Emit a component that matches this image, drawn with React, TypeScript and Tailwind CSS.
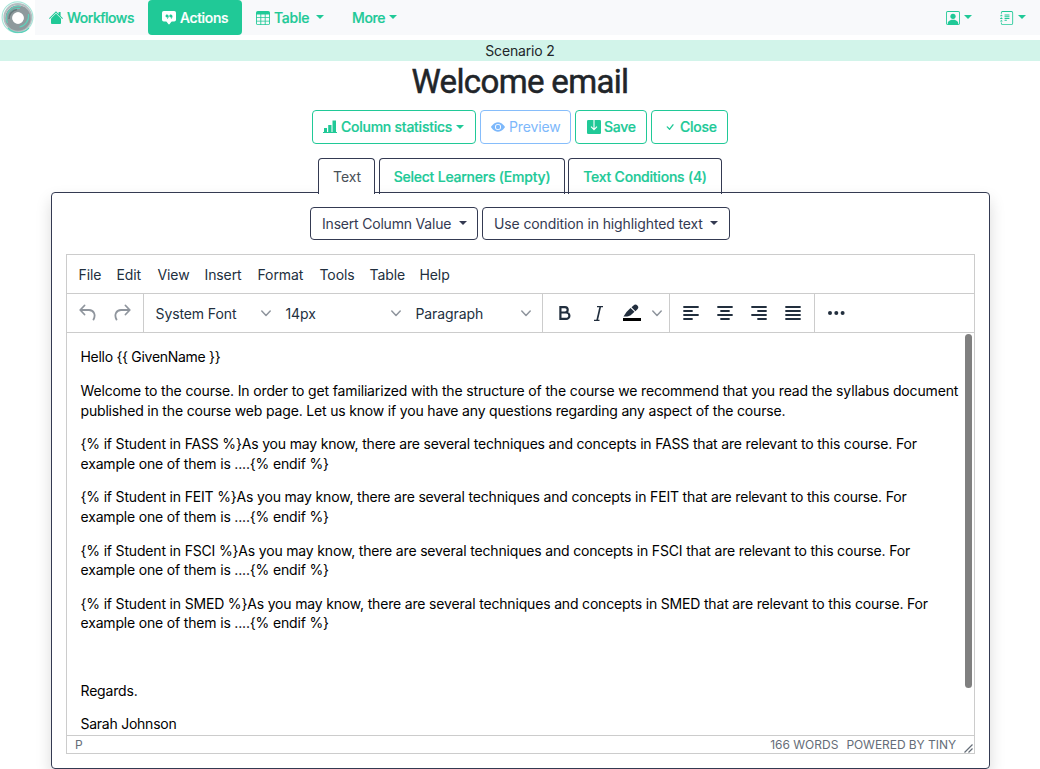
import type { ReactNode } from "react";
import { BsChatSquareQuoteFill, BsTable, BsPersonSquare, BsJournalText, BsEyeFill, BsCheck } from "react-icons/bs";

function Caret({ className = "" }: { className?: string }) {
  return (
    <svg width="8" height="4" viewBox="0 0 8 4" className={"inline-block shrink-0 " + className} fill="currentColor">
      <path d="M0 0h8L4 4z" />
    </svg>
  );
}

function Chevron() {
  return (
    <svg width="10" height="7" viewBox="0 0 10 7" fill="none" stroke="#8f959d" strokeWidth="1.5" strokeLinecap="round" strokeLinejoin="round">
      <path d="M.8 1 5 5.4 9.2 1" />
    </svg>
  );
}

function Logo() {
  return (
    <svg width="35" height="35" viewBox="0 0 35 35" className="shrink-0 bg-white" fill="none">
      <circle cx="17.5" cy="17.3" r="15.4" stroke="#a8e6d9" strokeWidth="1.2" />
      <circle cx="17.8" cy="17.5" r="13.4" stroke="#b4bdc0" strokeWidth="2" />
      <circle cx="18" cy="18" r="9.2" stroke="#8e9a9d" strokeWidth="7" />
      <path d="M7.500 23A12 12 0 0 1 21 6.500M11 12.500a9.500 9.500 0 0 1 9-4" stroke="#63cdb9" strokeWidth="1.200" />
      <path d="M28.500 14a11.500 11.500 0 0 1-9 13M8 28a14.500 14.500 0 0 0 21 0" stroke="#5fd0bb" strokeWidth="1.200" />
      <path d="M9 19a9 9 0 0 1 8-9.500" stroke="#69787c" strokeWidth="1.500" />
      <circle cx="18" cy="18" r="5.7" fill="#fff" />
    </svg>
  );
}

function HouseIcon() {
  return (
    <svg width="14" height="13" viewBox="0 0 14 13" fill="currentColor">
      <path d="M7 .3 9.600 2.900V1h2v3.900L14 7.300l-.7.6L7 1.800.7 7.900 0 7.300z" />
      <path d="M7 2.600 12 7.500v4.200c0 .7-.5 1.300-1.200 1.300H3.200C2.500 13 2 12.400 2 11.700V7.500z" />
    </svg>
  );
}

function StatsIcon() {
  return (
    <svg width="14" height="13" viewBox="0 0 14 13" fill="currentColor">
      <path d="M1 8h3v4H1zM5.200 5h3.300v7H5.200zM9.500.5h3.500V12H9.500zM0 12h14v1H0z" />
    </svg>
  );
}

function SaveIcon() {
  return (
    <svg width="14" height="14" viewBox="0 0 14 14" fill="none">
      <rect width="14" height="14" rx="1.300" fill="currentColor" />
      <path d="M7 0v9.200M4 6.600l3 3 3-3" stroke="#fff" strokeWidth="1.100" />
    </svg>
  );
}

const alignments: [number, number][][] = [
  [[1, 15], [1, 9], [1, 15], [1, 9]],
  [[1, 15], [4, 12], [1, 15], [4, 12]],
  [[1, 15], [7, 15], [1, 15], [7, 15]],
  [[1, 15], [1, 15], [1, 15], [1, 15]],
];

function Align({ rows }: { rows: [number, number][] }) {
  return (
    <svg width="16" height="14" viewBox="0 0 16 14" stroke="#222f3e" strokeWidth="1.8" strokeLinecap="round">
      {rows.map(([a, b], i) => (
        <path key={i} d={`M${a} ${1 + i * 4}H${b}`} />
      ))}
    </svg>
  );
}

function Outline({ className, children }: { className: string; children: ReactNode }) {
  return <button className={"flex shrink-0 items-center rounded-[4px] border pb-px whitespace-nowrap " + className}>{children}</button>;
}

const menus = [
  { name: "File", cls: "w-[38px]" },
  { name: "Edit", cls: "w-[41px]" },
  { name: "View", cls: "w-[47px]" },
  { name: "Insert", cls: "w-[53px]" },
  { name: "Format", cls: "w-[62px]" },
  { name: "Tools", cls: "w-[50px]" },
  { name: "Table", cls: "w-[50px]" },
  { name: "Help", cls: "w-[40px]" },
];

const conditions = ["FASS", "FEIT", "FSCI", "SMED"];

export default function App() {
  return (
    <div className="h-[769px] w-[1040px] overflow-hidden bg-white font-['Inter',sans-serif] text-[14px] text-[#212529]">
      <nav className="flex h-[35px] items-center bg-[#f8f9fb] font-medium tracking-[-0.25px] text-[#20c997] [-webkit-text-stroke:0.2px]">
        <Logo />
        <a className="ml-[14px] flex w-[99px] items-center gap-[4px] tracking-[-0.5px]"><HouseIcon />Workflows</a>
        <a className="flex h-[35px] w-[94px] items-center gap-[4px] rounded-[4px] bg-[#20c997] pl-[14px] tracking-[-0.35px] text-white"><BsChatSquareQuoteFill size={14} />Actions</a>
        <a className="ml-[14px] flex w-[96px] items-center gap-[4px]"><BsTable size={14} />Table<Caret className="mb-[2px] ml-[3px]" /></a>
        <a className="flex items-center gap-[4px] tracking-[-0.4px]">More<Caret className="mb-[2px]" /></a>
        <a className="ml-auto flex items-center gap-[4px]"><BsPersonSquare size={14} /><Caret className="mb-[2px]" /></a>
        <a className="mr-[14px] ml-[28px] flex items-center gap-[4px]"><BsJournalText size={14} /><Caret className="mb-[2px]" /></a>
      </nav>
      <div className="mt-[5px] flex h-[21px] items-center justify-center bg-[#d2f4ea] pb-px tracking-[-0.15px]">Scenario 2</div>
      <h1 className="flex h-[40px] items-center justify-center pt-px font-['Roboto',sans-serif] text-[33px] font-normal tracking-[-0.65px] [-webkit-text-stroke:0.5px]">Welcome email</h1>

      <div className="mt-[9px] flex justify-center gap-[4px] font-medium tracking-[-0.25px] text-[#20c997]">
        <Outline className="h-[34px] w-[164px] border-[#20c997] pl-[10px] [-webkit-text-stroke:0.2px]"><StatsIcon /><span className="ml-[4px]">Column statistics</span><Caret className="ml-[4px]" /></Outline>
        <Outline className="h-[34px] w-[91px] border-[#86bdfb] pl-[10px] font-normal text-[#7db8fb]"><BsEyeFill size={14} /><span className="ml-[4px] tracking-[-0.15px]">Preview</span></Outline>
        <Outline className="h-[34px] w-[72px] border-[#20c997] pl-[11px] [-webkit-text-stroke:0.2px]"><SaveIcon /><span className="ml-[3px] tracking-[-0.3px]">Save</span></Outline>
        <Outline className="h-[34px] w-[77px] border-[#20c997] pl-[11px] [-webkit-text-stroke:0.2px]"><BsCheck size={14} /><span className="ml-[3px]">Close</span></Outline>
      </div>

      <div className="relative z-10 mt-[14px] -mb-[2px] ml-[318px] flex h-[36px] font-medium tracking-[-0.22px] text-[#20c997]">
        <div className="flex w-[57px] justify-center rounded-t-[4px] border border-b-0 border-[#343a52] bg-white pt-[7px] pl-px font-normal tracking-[-0.1px] text-[#495057]">Text</div>
        <div className="ml-[4px] flex w-[186px] justify-center rounded-t-[4px] border border-b-0 border-[#343a52] pt-[7px] [-webkit-text-stroke:0.2px]">Select Learners (Empty)</div>
        <div className="ml-[3px] flex w-[154px] justify-center rounded-t-[4px] border border-b-0 border-[#343a52] pt-[7px] [-webkit-text-stroke:0.2px]">Text Conditions (4)</div>
      </div>

      <main className="ml-[51px] h-[577px] w-[939px] rounded-[4px] border border-[#343a52] px-[14px] pt-[14px] shadow-[0_8px_16px_rgba(0,0,0,0.15)]">
        <div className="flex gap-[4px] pl-[244px] tracking-[-0.15px] text-[#343a52]">
          <Outline className="h-[33px] w-[168px] border-[#343a52] pl-[11px]"><span className="w-[130px] text-left tracking-[-0.2px]">Insert Column Value</span><Caret className="ml-[7px]" /></Outline>
          <Outline className="h-[33px] w-[248px] border-[#343a52] pl-[11px]"><span className="w-[209px] text-left tracking-[-0.12px]">Use condition in highlighted text</span><Caret className="ml-[7px]" /></Outline>
        </div>

        <section className="mt-[14px] flex h-[500px] w-[909px] flex-col border border-[#ccc] text-[#222f3e]">
          <div className="flex h-[39px] shrink-0 items-center border-b border-[#ccc] pl-[11.500px] tracking-[-0.1px]">
            {menus.map((m) => <span key={m.name} className={m.cls}>{m.name}</span>)}
          </div>
          <div className="flex h-[39px] shrink-0 border-b border-[#ccc] tracking-[-0.1px]">
            <div className="flex w-[77px] items-center gap-[18px] border-r border-[#ccc] pl-[12px]">
              <svg width="17" height="18" viewBox="0 0 17 18" fill="none" stroke="#8f959d" strokeWidth="1.8" strokeLinecap="round" strokeLinejoin="round"><path d="M5.500 1.500 1.200 6l4.300 4.500M1.500 6H10c5 0 7 5 4.500 9.500" /></svg>
              <svg width="17" height="18" viewBox="0 0 17 18" fill="none" stroke="#8f959d" strokeWidth="1.8" strokeLinecap="round" strokeLinejoin="round"><path d="m11.500 1.500 4.300 4.500-4.300 4.500M15.500 6H7c-5 0-7 5-4.500 9.500" /></svg>
            </div>
            <div className="flex w-[399px] items-center border-r border-[#ccc] pl-[11.500px]">
              <span className="w-[105px]">System Font</span><Chevron />
              <span className="ml-[15px] w-[105px]">14px</span><Chevron />
              <span className="ml-[15px] w-[105px]">Paragraph</span><Chevron />
            </div>
            <div className="flex w-[127px] items-center border-r border-[#ccc] pl-[16px]">
              <svg width="12" height="14" viewBox="0 0 12 14" fill="none" stroke="#222f3e" strokeWidth="2.200"><path d="M1.100 1.100H6a2.700 2.700 0 0 1 0 5.400H1.100M6 6.500h1.200a3.200 3.200 0 0 1 0 6.400H1.100M1.400 0v14" /></svg>
              <svg className="ml-[23px]" width="9" height="15" viewBox="0 0 9 15" fill="none" stroke="#222f3e" strokeWidth="1.200"><path d="M3 .6h6M0 14.400h5.500" /><path d="m6.300.6-3.200 13.800" strokeWidth="1.700" /></svg>
              <svg className="ml-[20px]" width="19" height="18" viewBox="0 0 19 18"><path d="M0 14h18v3H0z" fill="#000" /><path d="M.5 12.500 3.500 8 7.500 4l4 3.800-3.800 3.500c-2 1.200-4 1.400-7.200 1.200z" fill="#222f3e" /><path d="m8.500 3.200 2-1.800a2.700 2.700 0 0 1 3.900 0 2.700 2.700 0 0 1 0 3.800l-2 2z" fill="#222f3e" /></svg>
              <span className="ml-[10px]"><Chevron /></span>
            </div>
            <div className="flex w-[145px] items-center gap-[18px] border-r border-[#ccc] pl-[13px]">
              {alignments.map((r, i) => <Align key={i} rows={r} />)}
            </div>
            <svg className="mt-[17px] ml-[13px]" width="17" height="4" viewBox="0 0 17 4" fill="#222f3e"><circle cx="2" cy="2" r="2" /><circle cx="8.300" cy="2" r="2" /><circle cx="14.600" cy="2" r="2" /></svg>
          </div>
          <div className="flex h-[402px] shrink-0 justify-between overflow-hidden text-black">
            <div className="w-[893px] shrink-0 pt-[14.400px] pl-[13.500px] leading-[19.600px] tracking-[-0.175px] whitespace-nowrap">
              <p className="tracking-[-0.3px]">Hello {"{{ GivenName }}"}</p>
              <p className="mt-[14px]"><span className="tracking-[-0.147px]">Welcome to the course. In order to get familiarized with the structure of the course we recommend that you read the syllabus document</span><br />published in the course web page. Let us know if you have any questions regarding any aspect of the course.</p>
              {conditions.map((id) => (
                <p key={id} className="mt-[14px]">{"{% if Student in " + id + " %}"}As you may know, there are several techniques and concepts in {id} that are relevant to this course. For<br />example one of them is ....{"{% endif %}"}</p>
              ))}
              <p className="mt-[14px]">&nbsp;</p>
              <p className="mt-[14px]">Regards.</p>
              <p className="mt-[14px] tracking-[-0.25px]">Sarah Johnson</p>
            </div>
            <div className="mt-px mr-[2px] h-[354px] w-[7px] rounded-full bg-[#808080]" />
          </div>
          <footer className="flex h-[18px] items-center border-t border-[#ccc] pl-[8px] text-[12px] text-[#656d78]">
            <span>P</span><span className="ml-auto">166 WORDS</span><span className="ml-[8px] tracking-[-0.05px]">POWERED BY TINY</span>
            <svg className="mt-[7px] mr-px ml-[8px]" width="9" height="9" viewBox="0 0 9 9" stroke="#656d78" strokeWidth="1.200"><path d="M.5 8.500 8.500.5M4.500 8.500l4-4" /></svg>
          </footer>
        </section>
      </main>
    </div>
  );
}
